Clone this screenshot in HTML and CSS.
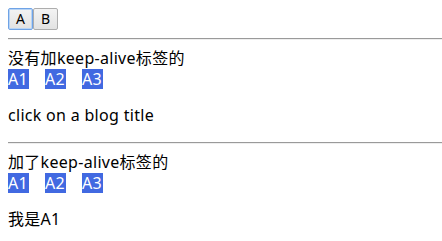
FILE: index.html
```html
<!DOCTYPE html>
<html>
<head>
<meta charset="utf-8">
<link rel="stylesheet" href="styles.css">
</head>
<body>
<div class="tabs"><button class="btn focused">A</button><button class="btn">B</button></div>
<hr class="rule">
<div class="line">没有加keep-alive标签的</div>
<div class="links"><a class="link">A1</a><a class="link">A2</a><a class="link">A3</a></div>
<p class="para">click on a blog title</p>
<hr class="rule">
<div class="line">加了keep-alive标签的</div>
<div class="links"><a class="link">A1</a><a class="link">A2</a><a class="link">A3</a></div>
<p class="para last">我是A1</p>
</body>
</html>
```
FILE: styles.css
```css
html, body { background: #fff; }
body {
  margin: 8px 0 0 8px;
  font-family: "Noto Sans", "Noto Sans CJK SC", sans-serif;
  font-size: 16px;
  line-height: 21px;
  letter-spacing: 0.3px;
  color: #000;
}
.tabs { display: flex; height: 22px; }
.btn {
  height: 22px;
  width: 25px;
  padding: 0;
  margin: 0;
  font-family: "Noto Sans", "Liberation Sans", sans-serif;
  font-size: 14px;
  line-height: 18px;
  color: #000;
  background: linear-gradient(#f3f3f3, #e2e2e2);
  border: 1px solid #adadad;
  border-radius: 2px;
}
.btn.focused {
  border-color: #6fa3e6;
  box-shadow: inset 0 0 0 1px #b8d4f5;
}
.rule {
  margin: 8px 0;
  height: 0;
  border: 0;
  border-top: 1px solid #9a9a9a;
  border-bottom: 1px solid #eeeeee;
}
.line { height: 21px; }
.links { display: flex; gap: 16px; height: 20px; }
.link {
  display: block;
  background: #4169e1;
  color: #fff;
  height: 20px;
  line-height: 20px;
  padding: 0 1px 0 0;
}
.para { margin: 16px 0; }
.para.last { margin-bottom: 0; }
```
